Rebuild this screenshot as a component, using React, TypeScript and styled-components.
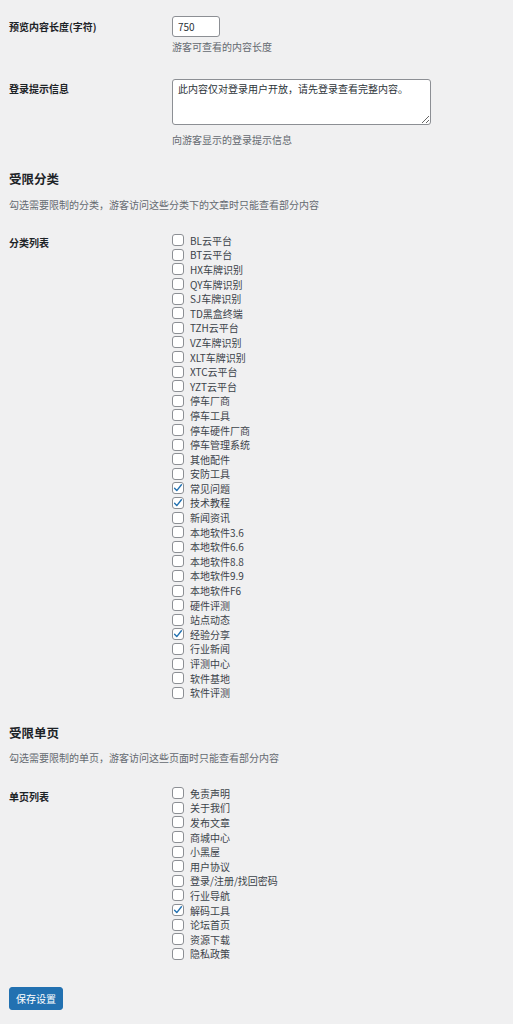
import styled, { createGlobalStyle } from 'styled-components'

const GlobalStyle = createGlobalStyle`
  html, body {
    margin: 0;
    background: #f0f0f1;
  }
  body {
    font-family: "Noto Sans CJK SC", "Noto Sans", sans-serif;
    font-size: 10px;
    color: #1d2327;
  }
`

const Page = styled.form`
  padding: 0 9px 14px;
  width: 495px;
  box-sizing: border-box;
`

const Row = styled.div<{ $top: number }>`
  display: grid;
  grid-template-columns: 163px 1fr;
  margin-top: ${props => props.$top}px;
`

const Label = styled.div<{ $pad: number; $lh?: number }>`
  font-weight: 700;
  font-size: 10px;
  line-height: ${props => props.$lh || 14}px;
  padding-top: ${props => props.$pad}px;
  color: #1d2327;
`

const Field = styled.div`
  display: flex;
  flex-direction: column;
  align-items: flex-start;
`

const NumberInput = styled.input`
  box-sizing: border-box;
  width: 48px;
  height: 21px;
  padding: 0 5px;
  border: 1px solid #8c8f94;
  border-radius: 3px;
  background: #fff;
  font-family: inherit;
  font-size: 10px;
  color: #2c3338;
`

const TextArea = styled.textarea`
  box-sizing: border-box;
  width: 259px;
  height: 46px;
  padding: 2px 5px;
  border: 1px solid #8c8f94;
  border-radius: 3px;
  background: #fff;
  font-family: inherit;
  font-size: 10px;
  line-height: 14px;
  color: #2c3338;
`

const Desc = styled.p<{ $top: number }>`
  margin: ${props => props.$top}px 0 0;
  font-size: 10px;
  line-height: 14px;
  color: #646970;
`

const Heading = styled.h2<{ $top: number }>`
  margin: ${props => props.$top}px 0 0;
  font-size: 12.5px;
  line-height: 16px;
  font-weight: 700;
  color: #1d2327;
`

const CheckList = styled.div`
  display: flex;
  flex-direction: column;
`

const CheckRow = styled.label`
  display: flex;
  align-items: center;
  height: 14.6px;
  font-size: 10px;
  color: #3c434a;
  white-space: nowrap;
`

const Box = styled.span`
  box-sizing: border-box;
  width: 12px;
  height: 12px;
  margin-right: 6px;
  border: 1px solid #8c8f94;
  border-radius: 3px;
  background: #fff;
  display: flex;
  align-items: center;
  justify-content: center;
  flex-shrink: 0;
`

const SaveButton = styled.button`
  margin-top: 26px;
  width: 54px;
  height: 23px;
  border: 1px solid #2271b1;
  border-radius: 3px;
  background: #2271b1;
  color: #fff;
  font-family: inherit;
  font-size: 10px;
  padding: 0;
`

const categories = [
  'BL云平台', 'BT云平台', 'HX车牌识别', 'QY车牌识别', 'SJ车牌识别', 'TD黑盒终端',
  'TZH云平台', 'VZ车牌识别', 'XLT车牌识别', 'XTC云平台', 'YZT云平台', '停车厂商',
  '停车工具', '停车硬件厂商', '停车管理系统', '其他配件', '安防工具', '常见问题',
  '技术教程', '新闻资讯', '本地软件3.6', '本地软件6.6', '本地软件8.8', '本地软件9.9',
  '本地软件F6', '硬件评测', '站点动态', '经验分享', '行业新闻', '评测中心',
  '软件基地', '软件评测',
]
const checkedCategories = ['常见问题', '技术教程', '经验分享']

const pages = [
  '免责声明', '关于我们', '发布文章', '商城中心', '小黑屋', '用户协议',
  '登录/注册/找回密码', '行业导航', '解码工具', '论坛首页', '资源下载', '隐私政策',
]
const checkedPages = ['解码工具']

const Check = ({ text, on }: { text: string; on: boolean }): JSX.Element => (
  <CheckRow>
    <Box>
      {on && (
        <svg width="10" height="10" viewBox="0 0 10 10">
          <path d="M1.6 5.2 L3.8 7.6 L8.4 1.8" fill="none" stroke="#2271b1" strokeWidth="1.4" strokeLinecap="round" strokeLinejoin="round" />
        </svg>
      )}
    </Box>
    {text}
  </CheckRow>
)

const App = (): JSX.Element => (
  <>
    <GlobalStyle />
    <Page onSubmit={e => e.preventDefault()}>
      <Row $top={16}>
        <Label $pad={0} $lh={21}>预览内容长度(字符)</Label>
        <Field>
          <NumberInput type="number" defaultValue={750} />
          <Desc $top={3}>游客可查看的内容长度</Desc>
        </Field>
      </Row>

      <Row $top={25}>
        <Label $pad={3}>登录提示信息</Label>
        <Field>
          <TextArea defaultValue="此内容仅对登录用户开放，请先登录查看完整内容。" />
          <Desc $top={8}>向游客显示的登录提示信息</Desc>
        </Field>
      </Row>

      <Heading $top={24}>受限分类</Heading>
      <Desc $top={11}>勾选需要限制的分类，游客访问这些分类下的文章时只能查看部分内容</Desc>

      <Row $top={21}>
        <Label $pad={3}>分类列表</Label>
        <CheckList>
          {categories.map(c => (
            <Check key={c} text={c} on={checkedCategories.includes(c)} />
          ))}
        </CheckList>
      </Row>

      <Heading $top={25}>受限单页</Heading>
      <Desc $top={10}>勾选需要限制的单页，游客访问这些页面时只能查看部分内容</Desc>

      <Row $top={21}>
        <Label $pad={4}>单页列表</Label>
        <CheckList>
          {pages.map(p => (
            <Check key={p} text={p} on={checkedPages.includes(p)} />
          ))}
        </CheckList>
      </Row>

      <SaveButton type="submit">保存设置</SaveButton>
    </Page>
  </>
)

export default App
